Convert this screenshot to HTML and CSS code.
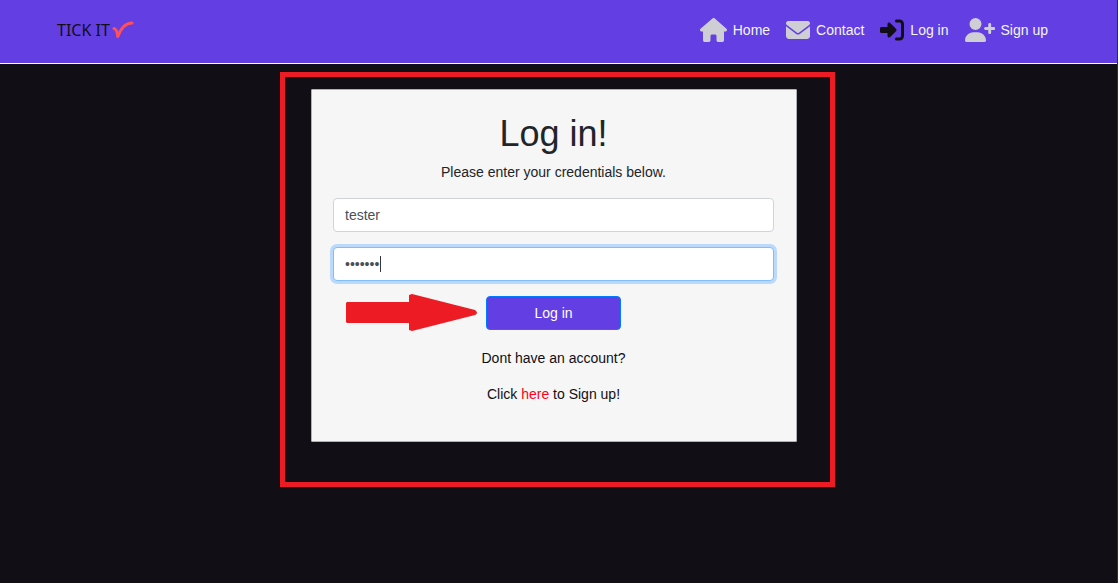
FILE: index.html
```html
<!DOCTYPE html>
<html lang="en">
<head>
<meta charset="utf-8">
<meta name="viewport" content="width=device-width, initial-scale=1">
<title>Tick It - Log in</title>
<link rel="stylesheet" href="styles.css">
</head>
<body>
<header class="site-header">
  <a class="brand" href="#">TICK IT<svg class="brand-tick" viewBox="0 0 22 18" aria-hidden="true"><path d="M2 7.500C4 8 5.200 10.500 5.800 15.500C8.500 8.500 13 2 20 2"/></svg></a>
  <nav class="nav">
    <a class="nav-link" href="#"><svg class="icon icon-home" viewBox="0 0 576 512" aria-hidden="true"><path d="M575.8 255.5c0 18-15 32.1-32 32.1l-32 0 .7 160.2c0 2.7-.2 5.4-.5 8.1l0 16.2c0 22.1-17.9 40-40 40l-16 0c-1.1 0-2.2 0-3.3-.1c-1.4 .1-2.8 .1-4.2 .1L416 512l-24 0c-22.1 0-40-17.9-40-40l0-24 0-64c0-17.7-14.3-32-32-32l-64 0c-17.7 0-32 14.3-32 32l0 64 0 24c0 22.1-17.9 40-40 40l-24 0-31.9 0c-1.5 0-3-.1-4.5-.2c-1.2 .1-2.4 .2-3.6 .2l-16 0c-22.1 0-40-17.9-40-40l0-112c0-.9 0-1.9 .1-2.8l0-69.7-32 0c-18 0-32-14-32-32.1c0-9 3-17 10-24L266.4 8c7-7 15-8 22-8s15 2 21 7L564.8 231.5c8 7 12 15 11 24z"/></svg>Home</a>
    <a class="nav-link" href="#"><svg class="icon icon-square" viewBox="0 0 512 512" aria-hidden="true"><path d="M48 64C21.5 64 0 85.5 0 112c0 15.1 7.1 29.3 19.2 38.4L236.8 313.6c11.4 8.5 27 8.5 38.4 0L492.8 150.4c12.1-9.1 19.2-23.3 19.2-38.4c0-26.5-21.5-48-48-48L48 64zM0 176L0 384c0 35.3 28.7 64 64 64l384 0c35.3 0 64-28.7 64-64l0-208L294.4 339.2c-22.8 17.1-54 17.1-76.8 0L0 176z"/></svg>Contact</a>
    <a class="nav-link" href="#" aria-current="page"><svg class="icon icon-square icon-active" viewBox="0 0 512 512" aria-hidden="true"><path d="M217.9 105.9L340.7 228.7c7.2 7.2 11.3 17.1 11.3 27.3s-4.1 20.1-11.3 27.3L217.9 406.1c-6.4 6.4-15 9.9-24 9.9c-18.7 0-33.9-15.2-33.9-33.9l0-62.1L32 320c-17.7 0-32-14.3-32-32l0-64c0-17.7 14.3-32 32-32l128 0 0-62.1c0-18.7 15.2-33.9 33.9-33.9c9 0 17.6 3.6 24 9.9zM352 416l64 0c17.7 0 32-14.3 32-32l0-256c0-17.7-14.3-32-32-32l-64 0c-17.7 0-32-14.3-32-32s14.3-32 32-32l64 0c53 0 96 43 96 96l0 256c0 53-43 96-96 96l-64 0c-17.7 0-32-14.3-32-32s14.3-32 32-32z"/></svg>Log in</a>
    <a class="nav-link" href="#"><svg class="icon icon-user" viewBox="0 0 640 512" aria-hidden="true"><path d="M96 128a128 128 0 1 1 256 0A128 128 0 1 1 96 128zM0 482.3C0 383.8 79.8 304 178.3 304l91.4 0C368.2 304 448 383.8 448 482.3c0 16.4-13.3 29.7-29.7 29.7L29.7 512C13.3 512 0 498.7 0 482.3zM504 312l0-64-64 0c-13.3 0-24-10.7-24-24s10.7-24 24-24l64 0 0-64c0-13.3 10.7-24 24-24s24 10.7 24 24l0 64 64 0c13.3 0 24 10.7 24 24s-10.7 24-24 24l-64 0 0 64c0 13.3-10.7 24-24 24s-24-10.7-24-24z"/><path class="plus" d="M528 136V312M440 224H616"/></svg>Sign up</a>
  </nav>
</header>
<main class="page">
  <section class="card">
    <h1 class="title">Log in!</h1>
    <p class="intro">Please enter your credentials below.</p>
    <form class="form">
      <input class="field" type="text" name="username" aria-label="Username" value="tester">
      <div class="field-wrap">
        <input class="field field-focused" type="password" name="password" aria-label="Password" value="secret1">
        <span class="caret"></span>
      </div>
      <button class="submit" type="button">Log in</button>
    </form>
    <p class="note">Dont have an account?</p>
    <p class="note">Click <a class="signup" href="#">here</a> to Sign up!</p>
    <svg class="arrow" viewBox="0 0 131 38" aria-hidden="true"><path d="M1 8H63V1L66 0L129 16Q133 19 129 21L66 37L63 36V29H1L0 28V9Z"/></svg>
    <div class="highlight"></div>
  </section>
</main>
</body>
</html>
```
FILE: styles.css
```css
* { box-sizing: border-box; }

html { min-height: 100%; background: #110e15; }

body {
  margin: 0;
  min-height: 100vh;
  border-right: 1px solid #302e33;
  font-family: "Liberation Sans", Arial, sans-serif;
  font-size: 14px;
  line-height: 22px;
  color: #212529;
}

.site-header {
  display: flex;
  flex-wrap: wrap;
  align-items: center;
  justify-content: space-between;
  min-height: 64px;
  padding: 0 69px 3px 57px;
  background: #623ee3;
  border-bottom: 1px solid #fff;
}

.brand {
  display: flex;
  align-items: center;
  gap: 2px;
  font-family: "Noto Sans", sans-serif;
  font-size: 16px;
  color: #110e15;
  text-decoration: none;
}

.brand-tick {
  width: 22px;
  height: 18px;
  fill: none;
  stroke: #ff4f58;
  stroke-width: 3;
  stroke-linecap: round;
  stroke-linejoin: round;
}

.nav { display: flex; flex-wrap: wrap; gap: 16px; }

.nav-link {
  display: flex;
  align-items: center;
  gap: 6px;
  color: #f5f5f5;
  text-decoration: none;
}

.icon { height: 24px; fill: #d0ced5; }
.icon-home { width: 27px; }
.icon-square { width: 24px; }
.icon-user { width: 30px; }
.icon-active { fill: #110e15; }
.plus { stroke: #d0ced5; stroke-width: 60; stroke-linecap: round; }

.page { padding: 25px 9px 25px 0; }

.card {
  position: relative;
  max-width: 486px;
  margin: 0 auto;
  padding: 21px 22px 36px 21px;
  background: #f6f6f6;
  border: 1px solid #b0afb1;
  border-radius: 1px;
  text-align: center;
}

.title {
  margin: 0 0 5px;
  font-size: 36px;
  font-weight: 400;
  line-height: 45px;
}

.intro { margin: 0 0 15px; }

.form {
  display: flex;
  flex-direction: column;
  gap: 15px;
}

.field-wrap { position: relative; }

.field {
  display: block;
  width: 100%;
  height: 34px;
  padding: 0 11px;
  background: #fff;
  border: 1px solid #ced4da;
  border-radius: 4px;
  font: inherit;
  color: #495057;
}

.field-focused {
  border-color: #80bdff;
  box-shadow: 0 0 0 3px #bbd9fa;
  outline: none;
}

.caret {
  position: absolute;
  top: 9px;
  left: 47px;
  width: 1px;
  height: 16px;
  background: #33383d;
}

.submit {
  align-self: center;
  min-width: 135px;
  height: 34px;
  padding: 0 12px 1px;
  background: #623ee3;
  border: 1px solid #007bff;
  border-radius: 4px;
  font: inherit;
  color: #fff;
}

.note { margin: 14px 0 0; color: #110e15; }
.form + .note { margin-top: 17px; }
.signup { color: #ff0019; text-decoration: none; }

.arrow {
  position: absolute;
  top: 204px;
  left: 34px;
  width: 131px;
  height: 38px;
  fill: #ed1c24;
}

.highlight {
  position: absolute;
  inset: -18px -39px -46px -32px;
  border: 5px solid #ed1c24;
  pointer-events: none;
}
```
